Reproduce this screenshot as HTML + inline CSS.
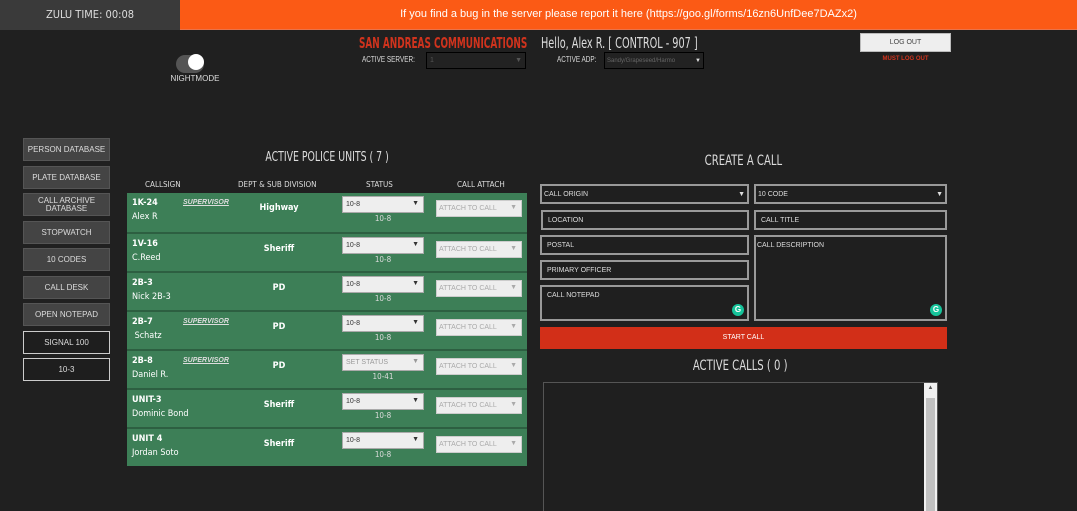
<!DOCTYPE html>
<html><head><meta charset="utf-8"><style>
*{box-sizing:border-box;margin:0;padding:0}
html,body{width:1077px;height:511px;overflow:hidden}
body{background:#202020;position:relative;font-family:"Liberation Sans",sans-serif;color:#fff}
.a{position:absolute}
.sb{position:absolute;left:23px;width:87px;height:23px;background:#444;border:1px solid #555;font-size:8px;color:#ddd;display:flex;align-items:center;justify-content:center;text-align:center;line-height:8px}
.sb.d{background:#1e1e1e;border:1px solid #ccc}
.row{position:absolute;left:127px;width:400px;height:39px;background:#3d7f57;border-top:2px solid #2d5f41}
.cs{position:absolute;left:5px;top:5px;font-size:9px;font-weight:bold;font-family:"DejaVu Sans Condensed",sans-serif}
.nm{position:absolute;left:5px;top:19px;font-size:9px;font-family:"DejaVu Sans Condensed",sans-serif}
.sup{position:absolute;left:56px;top:6px;font-size:7px;font-style:italic;font-weight:bold;text-decoration:underline;color:#ddd}
.dp{position:absolute;left:100px;width:104px;text-align:center;top:10px;font-size:9px;font-weight:bold;font-family:"DejaVu Sans Condensed",sans-serif}
.st{position:absolute;left:215px;top:3px;width:82px;height:17px;background:#eee;border:1px solid #aaa;font-size:7px;color:#333;padding:4px 3px}
.st:after{content:"▼";position:absolute;right:4px;top:3px;font-size:7px;color:#333}
.st.g{color:#999}.st.g:after{color:#999}
.sv{position:absolute;left:215px;width:82px;text-align:center;top:21px;font-size:8px;color:#ddd;font-family:"DejaVu Sans Condensed",sans-serif}
.at{position:absolute;left:309px;top:7px;width:86px;height:17px;background:#eee;border:1px solid #ccc;font-size:7px;color:#aaa;padding:4px 2px}
.at:after{content:"▼";position:absolute;right:4px;top:3px;font-size:7px;color:#aaa}
.in{position:absolute;border:2px solid #999;background:#1f1f1f;font-size:7px;color:#ddd;padding:5px 5px}
.gi{position:absolute;right:3px;bottom:3px;width:12px;height:12px;border-radius:50%;background:#15c39a;color:#fff;font-size:8px;text-align:center;line-height:12px;font-weight:bold}
.hd{position:absolute;top:180px;font-size:8px;font-family:"DejaVu Sans Condensed",sans-serif;color:#ddd}
</style></head><body>
<div class="a" style="left:0;top:0;width:1077px;height:30px;background:#fb5a15;border-bottom:1px solid #e9734a"></div>
<div class="a" style="left:0;top:0;width:180px;height:30px;background:#3a3a3a;color:#ddd;font-size:11px;text-align:center;line-height:29px;font-family:'DejaVu Sans Condensed',sans-serif">ZULU TIME: 00:08</div>
<div class="a" style="left:180px;top:0;width:897px;text-align:center;font-size:11px;line-height:28px;color:#fff">If you find a bug in the server please report it here (https://goo.gl/forms/16zn6UnfDee7DAZx2)</div>

<div class="a" style="left:176px;top:55px;width:28px;height:18px;border-radius:9px;background:#555"></div>
<div class="a" style="left:188px;top:54px;width:16px;height:16px;border-radius:50%;background:#fff"></div>
<div class="a" style="left:160px;top:74px;width:70px;text-align:center;font-size:8px;color:#ddd">NIGHTMODE</div>

<div class="a" style="left:359px;top:34px;font-size:15px;font-weight:bold;color:#d0331d;font-family:'DejaVu Sans Condensed',sans-serif;white-space:nowrap;transform:scaleX(.66);transform-origin:left">SAN ANDREAS COMMUNICATIONS</div>
<div class="a" style="left:541px;top:34px;font-size:15px;color:#ddd;font-family:'DejaVu Sans Condensed',sans-serif;white-space:nowrap;transform:scaleX(.72);transform-origin:left">Hello, Alex R. [ CONTROL - 907 ]</div>
<div class="a" style="left:362px;top:55px;font-size:8px;color:#ddd;transform:scaleX(.8);transform-origin:left">ACTIVE SERVER:</div>
<div class="a" style="left:426px;top:52px;width:100px;height:17px;border:1px solid #000;background:#222;font-size:7px;color:#555;padding:4px 3px">1<span style="float:right">▼</span></div>
<div class="a" style="left:557px;top:55px;font-size:8px;color:#ddd;transform:scaleX(.8);transform-origin:left">ACTIVE ADP:</div>
<div class="a" style="left:604px;top:52px;width:100px;height:17px;border:1px solid #000;background:#222;font-size:6px;color:#666;padding:5px 2px">Sandy/Grapeseed/Harmo<span style="float:right;color:#ddd">▼</span></div>
<div class="a" style="left:860px;top:33px;width:91px;height:19px;background:#eee;border:1px solid #bbb;font-size:7px;color:#444;text-align:center;line-height:17px">LOG OUT</div>
<div class="a" style="left:860px;top:56px;width:91px;text-align:center;font-size:6px;color:#d0331d;font-weight:bold">MUST LOG OUT</div>

<div class="sb" style="top:138px">PERSON DATABASE</div>
<div class="sb" style="top:166px">PLATE DATABASE</div>
<div class="sb" style="top:193px">CALL ARCHIVE<br>DATABASE</div>
<div class="sb" style="top:221px">STOPWATCH</div>
<div class="sb" style="top:248px">10 CODES</div>
<div class="sb" style="top:276px">CALL DESK</div>
<div class="sb" style="top:303px">OPEN NOTEPAD</div>
<div class="sb d" style="top:331px">SIGNAL 100</div>
<div class="sb d" style="top:358px">10-3</div>

<div class="a" style="left:127px;top:150px;width:400px;text-align:center;font-size:13px;color:#ddd;font-family:'DejaVu Sans Condensed',sans-serif"><span style="display:inline-block;transform:scaleX(.8)">ACTIVE POLICE UNITS ( 7 )</span></div>
<div class="hd" style="left:145px">CALLSIGN</div>
<div class="hd" style="left:238px">DEPT &amp; SUB DIVISION</div>
<div class="hd" style="left:366px">STATUS</div>
<div class="hd" style="left:457px">CALL ATTACH</div>

<div class="row" style="top:193px;border-top:none"><div class="cs">1K-24</div><div class="nm">Alex R</div><div class="sup">SUPERVISOR</div><div class="dp">Highway</div><div class="st">10-8</div><div class="sv">10-8</div><div class="at">ATTACH TO CALL</div></div>
<div class="row" style="top:232px"><div class="cs">1V-16</div><div class="nm">C.Reed</div><div class="dp">Sheriff</div><div class="st">10-8</div><div class="sv">10-8</div><div class="at">ATTACH TO CALL</div></div>
<div class="row" style="top:271px"><div class="cs">2B-3</div><div class="nm">Nick 2B-3</div><div class="dp">PD</div><div class="st">10-8</div><div class="sv">10-8</div><div class="at">ATTACH TO CALL</div></div>
<div class="row" style="top:310px"><div class="cs">2B-7</div><div class="nm">&nbsp;Schatz</div><div class="sup">SUPERVISOR</div><div class="dp">PD</div><div class="st">10-8</div><div class="sv">10-8</div><div class="at">ATTACH TO CALL</div></div>
<div class="row" style="top:349px"><div class="cs">2B-8</div><div class="nm">Daniel R.</div><div class="sup">SUPERVISOR</div><div class="dp">PD</div><div class="st g">SET STATUS</div><div class="sv">10-41</div><div class="at">ATTACH TO CALL</div></div>
<div class="row" style="top:388px"><div class="cs">UNIT-3</div><div class="nm">Dominic Bond</div><div class="dp">Sheriff</div><div class="st">10-8</div><div class="sv">10-8</div><div class="at">ATTACH TO CALL</div></div>
<div class="row" style="top:427px;height:39px"><div class="cs">UNIT 4</div><div class="nm">Jordan Soto</div><div class="dp">Sheriff</div><div class="st">10-8</div><div class="sv">10-8</div><div class="at">ATTACH TO CALL</div></div>

<div class="a" style="left:540px;top:153px;width:407px;text-align:center;font-size:14px;color:#ddd;font-family:'DejaVu Sans Condensed',sans-serif"><span style="display:inline-block;transform:scaleX(.8)">CREATE A CALL</span></div>
<div class="in" style="left:540px;top:184px;width:209px;height:20px;padding:5px 2px">CALL ORIGIN<span style="float:right">▼</span></div>
<div class="in" style="left:754px;top:184px;width:193px;height:20px;padding:5px 2px">10 CODE<span style="float:right">▼</span></div>
<div class="in" style="left:541px;top:210px;width:208px;height:20px">LOCATION</div>
<div class="in" style="left:754px;top:210px;width:193px;height:20px">CALL TITLE</div>
<div class="in" style="left:540px;top:235px;width:209px;height:20px">POSTAL</div>
<div class="in" style="left:540px;top:260px;width:209px;height:20px">PRIMARY OFFICER</div>
<div class="in" style="left:540px;top:285px;width:209px;height:36px">CALL NOTEPAD<div class="gi">G</div></div>
<div class="in" style="left:754px;top:235px;width:193px;height:86px;padding:5px 1px">CALL DESCRIPTION<div class="gi">G</div></div>
<div class="a" style="left:540px;top:327px;width:407px;height:22px;background:#d22f18;font-size:7px;color:#fff;text-align:center;line-height:22px">START CALL</div>
<div class="a" style="left:540px;top:358px;width:400px;text-align:center;font-size:14px;color:#ddd;font-family:'DejaVu Sans Condensed',sans-serif"><span style="display:inline-block;transform:scaleX(.8)">ACTIVE CALLS ( 0 )</span></div>
<div class="a" style="left:543px;top:382px;width:395px;height:129px;border:1px solid #555;border-bottom:none;background:#1f1f1f"></div>
<div class="a" style="left:924px;top:383px;width:13px;height:128px;background:#f1f1f1"></div>
<div class="a" style="left:926px;top:398px;width:9px;height:113px;background:#c1c1c1"></div>
<div class="a" style="left:924px;top:385px;width:13px;text-align:center;font-size:6px;color:#555">▲</div>
</body></html>
